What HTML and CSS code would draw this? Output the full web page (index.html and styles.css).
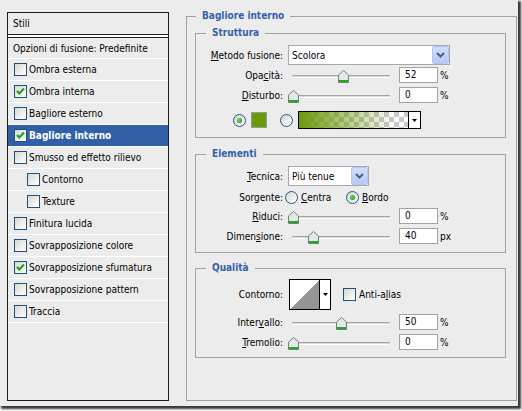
FILE: index.html
```html
<!DOCTYPE html>
<html lang="it">
<head>
<meta charset="utf-8">
<title>Stile livello</title>
<link rel="stylesheet" href="styles.css">
</head>
<body>
<div class="window">
  <div class="styles-panel">
    <div class="styles-head">Stili</div>
    <ul class="style-list">
      <li class="row opt">Opzioni di fusione: Predefinite</li>
      <li class="row"><span class="cb"></span>Ombra esterna</li>
      <li class="row"><span class="cb"><svg width="11" height="11" viewBox="0 0 11 11"><path d="M2 5 L4.3 7.5 L9 2.5" fill="none" stroke="#21a121" stroke-width="2.2"/></svg></span>Ombra interna</li>
      <li class="row"><span class="cb"></span>Bagliore esterno</li>
      <li class="row sel"><span class="cb"><svg width="11" height="11" viewBox="0 0 11 11"><path d="M2 5 L4.3 7.5 L9 2.5" fill="none" stroke="#21a121" stroke-width="2.2"/></svg></span>Bagliore interno</li>
      <li class="row"><span class="cb"></span>Smusso ed effetto rilievo</li>
      <li class="row sub"><span class="cb"></span>Contorno</li>
      <li class="row sub"><span class="cb"></span>Texture</li>
      <li class="row"><span class="cb"></span>Finitura lucida</li>
      <li class="row"><span class="cb"></span>Sovrapposizione colore</li>
      <li class="row"><span class="cb"><svg width="11" height="11" viewBox="0 0 11 11"><path d="M2 5 L4.3 7.5 L9 2.5" fill="none" stroke="#21a121" stroke-width="2.2"/></svg></span>Sovrapposizione sfumatura</li>
      <li class="row"><span class="cb"></span>Sovrapposizione pattern</li>
      <li class="row"><span class="cb"></span>Traccia</li>
    </ul>
  </div>

  <fieldset class="group main">
    <legend>Bagliore interno</legend>
    <div class="main-body">

      <fieldset class="group sub-group">
        <legend>Struttura</legend>
        <div class="sg-body struttura">
          <div class="frow r20">
            <span class="lbl"><u>M</u>etodo fusione:</span>
            <div class="select w-wide"><span class="sel-txt">Scolora</span><span class="sel-btn"><svg width="9" height="6" viewBox="0 0 9 6"><path d="M1 1 L4.5 4.5 L8 1" fill="none" stroke="#4b5f86" stroke-width="2"/></svg></span></div>
          </div>
          <div class="frow r16 mt2">
            <span class="lbl">Opa<u>c</u>ità:</span>
            <div class="slider"><span class="track"></span><span class="thumb" style="--v:0.52"><svg width="11" height="13" viewBox="0 0 11 13"><path d="M0.5 12.5 V5 L5.5 0.5 L10.5 5 V12.5 Z" fill="#e3e9e9" stroke="#71807f"/><rect x="1" y="10" width="9" height="2" fill="#1faa1f"/></svg></span></div>
            <span class="num">52</span><span class="unit">%</span>
          </div>
          <div class="frow r16 mt4">
            <span class="lbl"><u>D</u>isturbo:</span>
            <div class="slider"><span class="track"></span><span class="thumb" style="--v:0"><svg width="11" height="13" viewBox="0 0 11 13"><path d="M0.5 12.5 V5 L5.5 0.5 L10.5 5 V12.5 Z" fill="#e3e9e9" stroke="#71807f"/><rect x="1" y="10" width="9" height="2" fill="#1faa1f"/></svg></span></div>
            <span class="num">0</span><span class="unit">%</span>
          </div>
          <div class="frow r18 mt8 color-row">
            <span class="radio on"></span>
            <span class="swatch"></span>
            <span class="radio r2"></span>
            <div class="grad"><span class="grad-fill"></span><span class="grad-btn"><svg width="5" height="3" viewBox="0 0 5 3"><path d="M0 0 H5 L2.5 3 Z" fill="#000"/></svg></span></div>
          </div>
        </div>
      </fieldset>

      <fieldset class="group sub-group elementi">
        <legend>Elementi</legend>
        <div class="sg-body">
          <div class="frow r20">
            <span class="lbl"><u>T</u>ecnica:</span>
            <div class="select w-narrow"><span class="sel-txt">Più tenue</span><span class="sel-btn"><svg width="9" height="6" viewBox="0 0 9 6"><path d="M1 1 L4.5 4.5 L8 1" fill="none" stroke="#4b5f86" stroke-width="2"/></svg></span></div>
          </div>
          <div class="frow r14 mt4">
            <span class="lbl">Sorgente:</span>
            <span class="opt-radio first"><span class="radio"></span><span class="opt-txt"><u>C</u>entra</span></span>
            <span class="opt-radio"><span class="radio on"></span><span class="opt-txt"><u>B</u>ordo</span></span>
          </div>
          <div class="frow r16 mt4">
            <span class="lbl"><u>R</u>iduci:</span>
            <div class="slider"><span class="track"></span><span class="thumb" style="--v:0"><svg width="11" height="13" viewBox="0 0 11 13"><path d="M0.5 12.5 V5 L5.5 0.5 L10.5 5 V12.5 Z" fill="#e3e9e9" stroke="#71807f"/><rect x="1" y="10" width="9" height="2" fill="#1faa1f"/></svg></span></div>
            <span class="num">0</span><span class="unit">%</span>
          </div>
          <div class="frow r16 mt4">
            <span class="lbl">Dimen<u>s</u>ione:</span>
            <div class="slider"><span class="track"></span><span class="thumb" style="--v:0.21"><svg width="11" height="13" viewBox="0 0 11 13"><path d="M0.5 12.5 V5 L5.5 0.5 L10.5 5 V12.5 Z" fill="#e3e9e9" stroke="#71807f"/><rect x="1" y="10" width="9" height="2" fill="#1faa1f"/></svg></span></div>
            <span class="num">40</span><span class="unit">px</span>
          </div>
        </div>
      </fieldset>

      <fieldset class="group sub-group qualita">
        <legend>Qualità</legend>
        <div class="sg-body">
          <div class="frow r31">
            <span class="lbl">Contorno:</span>
            <div class="contour"><span class="contour-prev"></span><span class="contour-btn"><svg width="5" height="3" viewBox="0 0 5 3"><path d="M0 0 H5 L2.5 3 Z" fill="#000"/></svg></span></div>
            <span class="cb aa"></span><span class="aa-txt">Anti-a<u>l</u>ias</span>
          </div>
          <div class="frow r16 mt4">
            <span class="lbl">Inter<u>v</u>allo:</span>
            <div class="slider"><span class="track"></span><span class="thumb" style="--v:0.5"><svg width="11" height="13" viewBox="0 0 11 13"><path d="M0.5 12.5 V5 L5.5 0.5 L10.5 5 V12.5 Z" fill="#e3e9e9" stroke="#71807f"/><rect x="1" y="10" width="9" height="2" fill="#1faa1f"/></svg></span></div>
            <span class="num">50</span><span class="unit">%</span>
          </div>
          <div class="frow r16 mt4">
            <span class="lbl"><u>T</u>remolio:</span>
            <div class="slider"><span class="track"></span><span class="thumb" style="--v:0"><svg width="11" height="13" viewBox="0 0 11 13"><path d="M0.5 12.5 V5 L5.5 0.5 L10.5 5 V12.5 Z" fill="#e3e9e9" stroke="#71807f"/><rect x="1" y="10" width="9" height="2" fill="#1faa1f"/></svg></span></div>
            <span class="num">0</span><span class="unit">%</span>
          </div>
        </div>
      </fieldset>

    </div>
  </fieldset>
</div>
</body>
</html>
```

FILE: styles.css
```css
* { box-sizing: border-box; }
html, body { margin: 0; padding: 0; background: #ffffff; }
body {
  font-family: "DejaVu Sans Condensed", "DejaVu Sans", sans-serif;
  font-size: 10px;
  color: #000;
  width: 522px;
  height: 411px;
  overflow: hidden;
}

.window {
  width: 518px;
  height: 406px;
  background: #ececec;
  box-shadow: 2px 2px 2px 1px rgba(0, 0, 0, 0.78);
  display: flex;
  align-items: flex-start;
  padding-left: 7px;
}

/* ---------- left styles list ---------- */
.styles-panel {
  width: 162px;
  height: 389px;
  margin-top: 12px;
  border: 1px solid #1c1c1c;
  display: flex;
  flex-direction: column;
}
.styles-head {
  height: 22px;
  line-height: 21px;
  padding-left: 5px;
  border-bottom: 1px solid #1c1c1c;
  box-shadow: 0 2px 0 #ffffff;
}
.style-list {
  list-style: none;
  margin: 2px 0 0;
  padding: 0;
  border-top: 1px solid #1c1c1c;
}
.row {
  height: 22px;
  border-bottom: 1px solid #ffffff;
  display: flex;
  align-items: center;
  padding-left: 6px;
  gap: 2px;
  white-space: nowrap;
}
.row.opt { height: 21px; padding-left: 5px; }
.row.sub { padding-left: 19px; }
.row.sel { background: #3160a9; color: #fff; font-weight: bold; }

.cb {
  width: 13px;
  height: 13px;
  flex: none;
  border: 1px solid #1c5180;
  background: linear-gradient(135deg, #d8d8d2 0%, #f4f4f0 70%, #ffffff 100%);
  display: flex;
  align-items: center;
  justify-content: center;
}
.cb svg { display: block; }

/* ---------- fieldsets ---------- */
.group {
  border: 1px solid #a2a2a2;
  margin: 0;
  padding: 0;
  min-width: 0;
}
.group > legend {
  padding: 0 6px;
  line-height: 14px;
  font-weight: bold;
  color: #3561aa;
}
.main {
  width: 331px;
  height: 392px;
  margin: 9px 0 0 17px;
}
.main > legend { margin-left: 9px; }
.main-body { padding: 3px 10px 0 8px; }

.sub-group > legend { margin-left: 10px; }
.elementi { margin-top: 9px; }
.qualita { margin-top: 8px; }

.sg-body { padding: 5px 0 8px; }
.qualita .sg-body { padding: 4px 0 7px; }

.frow { display: flex; align-items: center; white-space: nowrap; }
.r14 { height: 14px; }
.r16 { height: 16px; }
.r18 { height: 18px; }
.r20 { height: 20px; }
.r31 { height: 31px; }
.mt2 { margin-top: 2px; }
.mt4 { margin-top: 4px; }
.mt8 { margin-top: 8px; }

.lbl { width: 87px; flex: none; text-align: right; }

/* select */
.select {
  margin-left: 5px;
  height: 20px;
  border: 1px solid #a3a9b0;
  background: #fff;
  display: flex;
  align-items: center;
  padding-left: 3px;
}
.w-wide { width: 162px; }
.w-narrow { width: 81px; }
.sel-txt { flex: 1; }
.sel-btn {
  width: 17px;
  height: 18px;
  flex: none;
  border: 1px solid #b4c5ec;
  border-radius: 2px;
  background: linear-gradient(#cfdcfc, #b7caf5);
  display: flex;
  align-items: center;
  justify-content: center;
}
.sel-btn svg { display: block; }

/* slider */
.slider {
  position: relative;
  margin-left: 5px;
  width: 104px;
  height: 16px;
  flex: none;
}
.track {
  position: absolute;
  left: 4px;
  right: 2px;
  top: 8px;
  height: 3px;
  border-top: 1px solid #a3a3a3;
  border-bottom: 1px solid #ffffff;
  background: #dcdcd4;
  border-radius: 1px;
}
.thumb {
  position: absolute;
  top: 3px;
  left: calc(var(--v) * 96px);
  width: 11px;
  height: 13px;
}
.thumb svg { display: block; }

.num {
  margin-left: 7px;
  width: 39px;
  height: 16px;
  flex: none;
  border: 1px solid #a3a3a3;
  background: #fff;
  padding-left: 5px;
  line-height: 14px;
}
.unit { margin-left: 2px; }

/* radios */
.radio {
  width: 13px;
  height: 13px;
  flex: none;
  border-radius: 50%;
  border: 1px solid #1f5686;
  background: linear-gradient(135deg, #d4d4ce 0%, #f2f2ee 65%, #ffffff 100%);
  display: flex;
  align-items: center;
  justify-content: center;
}
.radio.on::after {
  content: "";
  width: 5px;
  height: 5px;
  border-radius: 50%;
  background: radial-gradient(circle at 40% 40%, #6fe06f 0%, #27ad27 60%, #1a8f1a 100%);
}

.color-row { padding-left: 37px; }
.swatch {
  margin-left: 5px;
  width: 16px;
  height: 16px;
  flex: none;
  border: 1px solid #9a9a9a;
  background: #6a9a0a;
}
.radio.r2 { margin-left: 13px; }
.grad {
  margin-left: 5px;
  width: 123px;
  height: 18px;
  flex: none;
  border: 1px solid #000;
  display: flex;
}
.grad-fill {
  flex: 1;
  background:
    linear-gradient(to right, #6b9a0b 0%, rgba(107, 154, 11, 0.55) 40%, rgba(107, 154, 11, 0) 88%),
    conic-gradient(#c9c9c9 25%, #ffffff 0 50%, #c9c9c9 0 75%, #ffffff 0) 0 0 / 10px 10px;
}
.grad-btn {
  width: 12px;
  flex: none;
  border-left: 1px solid #000;
  background: #fff;
  display: flex;
  align-items: center;
  justify-content: center;
}
.grad-btn svg, .contour-btn svg { display: block; }

/* source options */
.opt-radio { display: flex; align-items: center; gap: 3px; }
.opt-radio.first { margin-left: 2px; width: 61px; flex: none; }

/* contour */
.contour {
  margin-left: 6px;
  width: 42px;
  height: 31px;
  flex: none;
  border: 1px solid #000;
  background: #fff;
  display: flex;
}
.contour-prev {
  width: 29px;
  flex: none;
  background: linear-gradient(to top left, #959595 50%, #ffffff 50%);
}
.contour-btn {
  flex: 1;
  border-left: 1px solid #000;
  display: flex;
  align-items: center;
  justify-content: center;
}
.cb.aa { margin-left: 12px; }
.aa-txt { margin-left: 3px; }
```
